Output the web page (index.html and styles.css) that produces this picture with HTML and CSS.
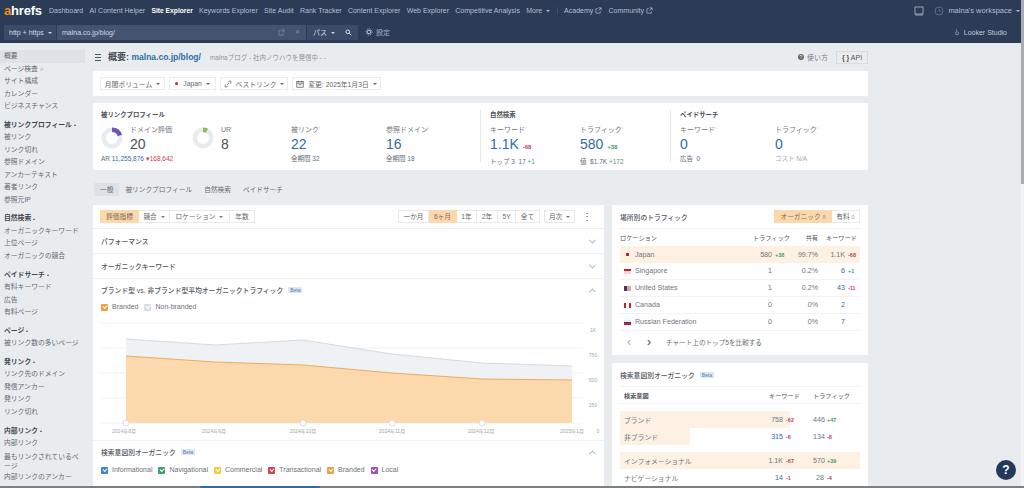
FILE: index.html
```html
<!DOCTYPE html>
<html>
    <head>
        <title>Site Explorer - malna.co.jp/blog/</title>
        <link rel="stylesheet" href="styles.css">
    </head>
    <body>
        <header class="topbar">
            <nav class="navRow">
                <span class="logo"><b>a</b>hrefs</span>
                <a>Dashboard</a>
                <a>AI Content Helper</a>
                <a class="active">Site Explorer</a>
                <a>Keywords Explorer</a>
                <a>Site Audit</a>
                <a>Rank Tracker</a>
                <a>Content Explorer</a>
                <a>Web Explorer</a>
                <a>Competitive Analysis</a>
                <a class="more">More <i class="caret"></i></a>
                <a class="ext">Academy <svg class="extIcon" viewBox="0 0 8 8"><path d="M6 5v2H1V2h2M4 1h3v3M7 1 4 4"/></svg></a>
                <a class="ext">Community <svg class="extIcon" viewBox="0 0 8 8"><path d="M6 5v2H1V2h2M4 1h3v3M7 1 4 4"/></svg></a>
                <span class="navRight">
                    <svg class="navIcon" viewBox="0 0 10 10"><rect x="1" y="1" width="8" height="7"/><path d="M1 9h8"/></svg>
                    <svg class="navIcon dim" viewBox="0 0 10 10"><circle cx="5" cy="5" r="4"/><path d="M5 3v2l2 0"/></svg>
                    <a>malna's workspace <i class="caret"></i></a>
                </span>
            </nav>
            <div class="searchRow">
                <div class="searchBox">
                    <span class="protocol">http + https <i class="caret"></i></span>
                    <span class="urlField">
                        <span>malna.co.jp/blog/</span>
                        <span class="urlIcons">
                            <svg class="extIcon dim" viewBox="0 0 8 8"><path d="M6 5v2H1V2h2M4 1h3v3M7 1 4 4"/></svg>
                            <span class="dim">✕</span>
                        </span>
                    </span>
                    <span class="pathMode">パス <i class="caret"></i></span>
                    <span class="searchBtn">
                        <svg viewBox="0 0 10 10"><circle cx="4" cy="4" r="2.6"/><path d="M6 6l3 3"/></svg>
                    </span>
                </div>
                <span class="settings">
                    <svg viewBox="0 0 10 10"><circle cx="5" cy="5" r="2.2"/><circle cx="5" cy="5" r="3.8" stroke-dasharray="1.5 1.5"/></svg>
                    設定
                </span>
                <span class="looker">
                    <svg viewBox="0 0 10 12"><circle cx="5" cy="8" r="2.6"/><path d="M4 1v3"/></svg>
                    Looker Studio
                </span>
            </div>
        </header>

        <div class="page">
            <aside class="sidebar">
                <ul class="sideList">
                    <li class="current">概要</li>
                    <li>ページ検査 <span class="tinyGlass">⌕</span></li>
                    <li>サイト構成</li>
                    <li>カレンダー</li>
                    <li>ビジネスチャンス</li>
                </ul>
                <ul class="sideList">
                    <li class="sideHead">被リンクプロフィール <i class="up"></i></li>
                    <li>被リンク</li>
                    <li>リンク切れ</li>
                    <li>参照ドメイン</li>
                    <li>アンカーテキスト</li>
                    <li>著者リンク</li>
                    <li>参照元IP</li>
                </ul>
                <ul class="sideList">
                    <li class="sideHead">自然検索 <i class="up"></i></li>
                    <li>オーガニックキーワード</li>
                    <li>上位ページ</li>
                    <li>オーガニックの競合</li>
                </ul>
                <ul class="sideList">
                    <li class="sideHead">ペイドサーチ <i class="up"></i></li>
                    <li>有料キーワード</li>
                    <li>広告</li>
                    <li>有料ページ</li>
                </ul>
                <ul class="sideList">
                    <li class="sideHead">ページ <i class="up"></i></li>
                    <li>被リンク数の多いページ</li>
                </ul>
                <ul class="sideList">
                    <li class="sideHead">発リンク <i class="up"></i></li>
                    <li>リンク先のドメイン</li>
                    <li>発信アンカー</li>
                    <li>発リンク</li>
                    <li>リンク切れ</li>
                </ul>
                <ul class="sideList">
                    <li class="sideHead">内部リンク <i class="up"></i></li>
                    <li>内部リンク</li>
                    <li class="wrap">最もリンクされているページ</li>
                    <li>内部リンクのアンカー</li>
                </ul>
            </aside>

            <main class="content">
                <div class="titleRow">
                    <span class="burger"></span>
                    <h1>概要: <span class="blue titleUrl">malna.co.jp/blog/</span></h1>
                    <span class="subtitle">malnaブログ - 社内ノウハウを発信中 - -</span>
                    <span class="help"><i class="helpDot">?</i> 使い方</span>
                    <span class="apiBtn"><b>{ }</b> API</span>
                </div>

                <div class="filters">
                    <span class="chip w65">月間ボリューム <i class="caret"></i></span>
                    <span class="chip w47"><i class="jpDot"></i> Japan <i class="caret"></i></span>
                    <span class="chip w68">
                        <svg class="chipIcon" viewBox="0 0 10 10"><path d="M4 6l2-2M3 5 1.5 6.5a1.4 1.4 0 0 0 2 2L5 7M5 3l1.5-1.5a1.4 1.4 0 0 1 2 2L7 5"/></svg>
                        ベストリンク <i class="caret"></i>
                    </span>
                    <span class="chip w89">
                        <svg class="chipIcon" viewBox="0 0 10 10"><rect x="1" y="2" width="8" height="7"/><path d="M1 4h8M3 1v2M7 1v2M3 6h4"/></svg>
                        変更: 2025年1月3日 <i class="caret"></i>
                    </span>
                </div>

                <section class="metrics">
                    <div class="metricGroup backlinks">
                        <h3>被リンクプロフィール</h3>
                        <div class="metricRow">
                            <div class="metric mDr">
                                <div class="ratingTop">
                                    <svg class="donut" viewBox="0 0 24 24">
                                        <circle class="donutBg" cx="12" cy="12" r="9"/>
                                        <circle class="donutDr" cx="12" cy="12" r="9" pathLength="100" stroke-dasharray="20 80" transform="rotate(-90 12 12)"/>
                                    </svg>
                                    <div>
                                        <div class="metricLabel">ドメイン評価<sup>i</sup></div>
                                        <div class="metricValue dark">20</div>
                                    </div>
                                </div>
                                <div class="metricSub arLine">AR <span class="blue">11,255,876</span> <span class="red">▾168,642</span></div>
                            </div>
                            <div class="metric mUr">
                                <div class="ratingTop">
                                    <svg class="donut" viewBox="0 0 24 24">
                                        <circle class="donutBg" cx="12" cy="12" r="9"/>
                                        <circle class="donutUr" cx="12" cy="12" r="9" pathLength="100" stroke-dasharray="8 92" transform="rotate(-90 12 12)"/>
                                    </svg>
                                    <div>
                                        <div class="metricLabel">UR<sup>i</sup></div>
                                        <div class="metricValue dark">8</div>
                                    </div>
                                </div>
                            </div>
                            <div class="metric mLinks">
                                <div class="metricLabel">被リンク<sup>i</sup></div>
                                <div class="metricValue blue">22</div>
                                <div class="metricSub">全期間 32</div>
                            </div>
                            <div class="metric mRefs">
                                <div class="metricLabel">参照ドメイン<sup>i</sup></div>
                                <div class="metricValue blue">16</div>
                                <div class="metricSub">全期間 18</div>
                            </div>
                        </div>
                    </div>
                    <div class="metricGroup organic">
                        <h3>自然検索</h3>
                        <div class="metricRow">
                            <div class="metric m90">
                                <div class="metricLabel">キーワード<sup>i</sup></div>
                                <div class="metricValue blue">1.1K <small class="red">-68</small></div>
                                <div class="metricSub">トップ 3 &nbsp;17 <span class="green">+1</span></div>
                            </div>
                            <div class="metric m90">
                                <div class="metricLabel">トラフィック<sup>i</sup></div>
                                <div class="metricValue blue">580 <small class="green">+38</small></div>
                                <div class="metricSub">値 &nbsp;$1.7K <span class="green">+172</span></div>
                            </div>
                        </div>
                    </div>
                    <div class="metricGroup paid">
                        <h3>ペイドサーチ</h3>
                        <div class="metricRow">
                            <div class="metric m95">
                                <div class="metricLabel">キーワード<sup>i</sup></div>
                                <div class="metricValue blue">0</div>
                                <div class="metricSub">広告 &nbsp;0</div>
                            </div>
                            <div class="metric m90">
                                <div class="metricLabel">トラフィック<sup>i</sup></div>
                                <div class="metricValue blue">0</div>
                                <div class="metricSub faint">コスト N/A</div>
                            </div>
                        </div>
                    </div>
                </section>

                <div class="tabs">
                    <span class="tab selected">一般</span>
                    <span class="tab">被リンクプロフィール</span>
                    <span class="tab">自然検索</span>
                    <span class="tab">ペイドサーチ</span>
                </div>

                <div class="columns">
                    <div class="mainCard">
                        <div class="toolbar">
                            <div class="segments">
                                <span class="seg on w39">評価指標</span>
                                <span class="seg w31">競合 <i class="caret grey"></i></span>
                                <span class="seg w60">ロケーション <i class="caret grey"></i></span>
                                <span class="seg w25">年数</span>
                            </div>
                            <div class="segments pushRight">
                                <span class="seg w31">一か月</span>
                                <span class="seg on w28">6ヶ月</span>
                                <span class="seg w20">1年</span>
                                <span class="seg w21">2年</span>
                                <span class="seg w18">5Y</span>
                                <span class="seg w24">全て</span>
                            </div>
                            <span class="seg single w31">月次 <i class="caret grey"></i></span>
                            <span class="kebab">⋮</span>
                        </div>

                        <div class="accRow">
                            <h4>パフォーマンス</h4>
                            <i class="chev"></i>
                        </div>
                        <div class="accRow">
                            <h4>オーガニックキーワード</h4>
                            <i class="chev"></i>
                        </div>

                        <div class="accOpen">
                            <div class="accHead">
                                <h4>ブランド型 vs. 非ブランド型平均オーガニックトラフィック <span class="beta">Beta</span></h4>
                                <i class="chev open"></i>
                            </div>
                            <div class="legend">
                                <span><i class="check orange"></i>Branded</span>
                                <span><i class="check pale"></i>Non-branded</span>
                            </div>
                            <svg class="chart" viewBox="0 0 511 122">
                                <g class="grid">
                                    <path d="M8 5H490M8 30H490M8 55H490M8 80H490M8 105H490"/>
                                </g>
                                <path class="areaGrey" d="M33 21 122 27 210 22 299 36 389 45 479 48V105H33Z"/>
                                <path class="lineGrey" d="M33 21 122 27 210 22 299 36 389 45 479 48"/>
                                <path class="areaOrange" d="M33 38 122 44 210 47 299 55 389 61 479 62V105H33Z"/>
                                <path class="lineOrange" d="M33 38 122 44 210 47 299 55 389 61 479 62"/>
                                <g class="marks">
                                    <circle cx="33" cy="105" r="3"/>
                                    <circle cx="210" cy="105" r="3"/>
                                    <circle cx="299" cy="105" r="3"/>
                                    <circle cx="389" cy="105" r="3"/>
                                </g>
                                <g class="axis">
                                    <text x="31" y="115" text-anchor="middle">2024年8月</text>
                                    <text x="121" y="115" text-anchor="middle">2024年9月</text>
                                    <text x="210" y="115" text-anchor="middle">2024年10月</text>
                                    <text x="299" y="115" text-anchor="middle">2024年11月</text>
                                    <text x="388" y="115" text-anchor="middle">2024年12月</text>
                                    <text x="479" y="115" text-anchor="middle">2025年1月</text>
                                    <text x="500" y="14" text-anchor="middle">1K</text>
                                    <text x="500" y="39" text-anchor="middle">750</text>
                                    <text x="500" y="64" text-anchor="middle">500</text>
                                    <text x="500" y="89" text-anchor="middle">250</text>
                                    <text x="505" y="115" text-anchor="middle">0</text>
                                </g>
                            </svg>
                        </div>

                        <div class="accOpen lastAcc">
                            <div class="accHead">
                                <h4>検索意図別オーガニック <span class="beta">Beta</span></h4>
                                <i class="chev open"></i>
                            </div>
                            <div class="legend">
                                <span><i class="check blueBox"></i>Informational</span>
                                <span><i class="check greenBox"></i>Navigational</span>
                                <span><i class="check yellowBox"></i>Commercial</span>
                                <span><i class="check redBox"></i>Transactional</span>
                                <span><i class="check orange"></i>Branded</span>
                                <span><i class="check purpleBox"></i>Local</span>
                            </div>
                        </div>
                    </div>

                    <div class="sideCards">
                        <section class="card locCard">
                            <div class="cardHead">
                                <h4>場所別のトラフィック</h4>
                                <div class="segments pushRight">
                                    <span class="seg on w58">オーガニック <small>8</small></span>
                                    <span class="seg w28">有料 <small>0</small></span>
                                </div>
                            </div>
                            <div class="tRow tHead">
                                <span class="cName">ロケーション</span>
                                <span class="cTraffic">トラフィック</span>
                                <span class="cShare">共有</span>
                                <span class="cKw">キーワード</span>
                            </div>
                            <div class="tRow hl">
                                <span class="cName"><i class="flag jp"></i>Japan</span>
                                <span class="cTraffic"><em>580</em><small class="green">+38</small></span>
                                <span class="cShare">99.7%</span>
                                <span class="cKw"><em>1.1K</em><small class="red">-68</small></span>
                            </div>
                            <div class="tRow">
                                <span class="cName"><i class="flag sg"></i>Singapore</span>
                                <span class="cTraffic"><em>1</em></span>
                                <span class="cShare">0.2%</span>
                                <span class="cKw"><em class="blue">6</em><small class="green">+1</small></span>
                            </div>
                            <div class="tRow">
                                <span class="cName"><i class="flag us"></i>United States</span>
                                <span class="cTraffic"><em>1</em></span>
                                <span class="cShare">0.2%</span>
                                <span class="cKw"><em class="blue">43</em><small class="red">-11</small></span>
                            </div>
                            <div class="tRow">
                                <span class="cName"><i class="flag ca"></i>Canada</span>
                                <span class="cTraffic"><em>0</em></span>
                                <span class="cShare">0%</span>
                                <span class="cKw"><em class="blue">2</em></span>
                            </div>
                            <div class="tRow">
                                <span class="cName"><i class="flag ru"></i>Russian Federation</span>
                                <span class="cTraffic"><em>0</em></span>
                                <span class="cShare">0%</span>
                                <span class="cKw"><em class="blue">7</em></span>
                            </div>
                            <div class="pager">
                                <span class="pageArrow dim">‹</span>
                                <span class="pageArrow">›</span>
                                <span class="pagerText">チャート上のトップ5を比較する</span>
                            </div>
                        </section>

                        <section class="card intentCard">
                            <div class="cardHead">
                                <h4>検索意図別オーガニック <span class="beta">Beta</span></h4>
                            </div>
                            <div class="iRow iHead">
                                <span class="iName"><b>検索意図</b></span>
                                <span class="iKw">キーワード</span>
                                <span class="iTr">トラフィック</span>
                            </div>
                            <div class="iGroup">
                                <div class="iRow">
                                    <i class="bar" style="width: 170px"></i>
                                    <span class="iName">ブランド</span>
                                    <span class="iKw"><em>758</em><small class="red">-62</small></span>
                                    <span class="iTr"><em>446</em><small class="green">+47</small></span>
                                </div>
                                <div class="iRow">
                                    <i class="bar" style="width: 70px"></i>
                                    <span class="iName">非ブランド</span>
                                    <span class="iKw"><em class="blue">315</em><small class="red">-6</small></span>
                                    <span class="iTr"><em>134</em><small class="red">-8</small></span>
                                </div>
                            </div>
                            <div class="iGroup">
                                <div class="iRow">
                                    <i class="bar" style="width: 240px"></i>
                                    <span class="iName">インフォメーショナル</span>
                                    <span class="iKw"><em>1.1K</em><small class="red">-67</small></span>
                                    <span class="iTr"><em>570</em><small class="green">+39</small></span>
                                </div>
                                <div class="iRow">
                                    <span class="iName">ナビゲーショナル</span>
                                    <span class="iKw"><em class="blue">14</em><small class="red">-1</small></span>
                                    <span class="iTr"><em>28</em><small class="red">-4</small></span>
                                </div>
                            </div>
                        </section>
                    </div>
                </div>
            </main>
        </div>

        <div class="scrollbar"></div>
        <div class="windowEdge"><span class="edgeBlob"></span></div>
        <span class="helpFab">?</span>
    </body>
</html>
```

FILE: styles.css
```css
* {
    box-sizing: border-box;
}

html, body {
    height: 488px;
    overflow: hidden;
}

body {
    margin: 0;
    background-color: #e9ecef;
    color: #555c66;
    font-family: "Liberation Sans", "Noto Sans CJK JP", sans-serif;
    font-size: 9px;
}

h1, h3, h4, ul {
    margin: 0;
    padding: 0;
}

i, em {
    font-style: normal;
}

.blue {
    color: #2f6ea5;
}

.red {
    color: #c8434f;
}

.green {
    color: #3f9e6c;
}

.dark {
    color: #4a4f57;
}

.dim {
    opacity: 0.45;
}

.caret {
    display: inline-block;
    width: 0;
    height: 0;
    margin-left: 2px;
    vertical-align: middle;
    border-left: 2px solid transparent;
    border-right: 2px solid transparent;
    border-top: 2.5px solid currentColor;
}

.caret.grey {
    color: #777;
}

/* top bars */
.topbar {
    height: 43px;
    background-color: #2c3b56;
    color: #b6bfcc;
}

.navRow {
    display: flex;
    align-items: center;
    height: 21px;
    padding-left: 4px;
    font-size: 7px;
    white-space: nowrap;
}

.navRow a {
    margin-right: 6.3px;
}

.navRow a.active {
    color: #fff;
    font-size: 6.7px;
    font-weight: bold;
}

.navRow a.more {
    padding-right: 7px;
    margin-right: 6px;
    border-right: 1px solid #3f4e69;
}

.logo {
    width: 45px;
    color: #fff;
    font-size: 13px;
    font-weight: bold;
    letter-spacing: -0.2px;
}

.logo b {
    color: #f28a1e;
}

.extIcon {
    width: 7px;
    height: 7px;
    fill: none;
    stroke: currentColor;
    stroke-width: 0.8;
    vertical-align: -1px;
}

.navRight {
    display: flex;
    align-items: center;
    gap: 10px;
    margin-left: auto;
    font-size: 7.5px;
}

.navRight a {
    margin-left: -6px;
    margin-right: 4px;
}

.navIcon {
    width: 10px;
    height: 10px;
    fill: none;
    stroke: currentColor;
    stroke-width: 0.8;
}

.searchRow {
    display: flex;
    align-items: center;
    height: 22px;
    padding-left: 4px;
    font-size: 7px;
}

.searchBox {
    display: flex;
    height: 15px;
    width: 354px;
    background-color: #3b4a66;
    line-height: 15px;
    color: #d3d8e0;
}

.protocol {
    width: 53px;
    padding-left: 5px;
    border-right: 1px solid #2c3b56;
}

.urlField {
    display: flex;
    justify-content: space-between;
    width: 250px;
    padding: 0 6px 0 5px;
    background-color: #44536e;
    border-right: 1px solid #2c3b56;
}

.urlIcons {
    display: flex;
    align-items: center;
    gap: 10px;
    font-size: 6px;
}

.pathMode {
    width: 32px;
    padding-left: 6px;
}

.searchBtn {
    display: flex;
    align-items: center;
    justify-content: center;
    width: 19px;
}

.searchBtn svg {
    width: 7px;
    height: 7px;
    fill: none;
    stroke: #e5e8ed;
    stroke-width: 1.3;
}

.settings {
    display: flex;
    align-items: center;
    gap: 3px;
    margin-left: 7px;
    color: #a6b0bf;
}

.settings svg {
    width: 8px;
    height: 8px;
    fill: none;
    stroke: #ccd2db;
    stroke-width: 1.1;
}

.looker {
    display: flex;
    align-items: center;
    gap: 4px;
    margin-left: auto;
    margin-right: 17px;
    color: #c3cad5;
}

.looker svg {
    width: 6px;
    height: 8px;
    fill: none;
    stroke: currentColor;
    stroke-width: 0.9;
}

/* page */
.page {
    display: flex;
    height: 445px;
    overflow: hidden;
}

.sidebar {
    flex: none;
    width: 93px;
    padding-top: 7px;
    color: #626a74;
    font-size: 6.8px;
}

.sideList {
    list-style: none;
    margin-bottom: 6.2px;
}

.sideList li {
    height: 12.5px;
    padding-left: 4px;
    line-height: 12.5px;
    white-space: nowrap;
}

.sideList li.wrap {
    height: 21px;
    line-height: 9px;
    padding-top: 2px;
    padding-right: 11px;
    white-space: normal;
}

.sideList li.current {
    width: 85px;
    background-color: #dfe2e6;
}

.sideList li.sideHead {
    color: #43484f;
    font-weight: bold;
}

.up {
    display: inline-block;
    vertical-align: middle;
    border-left: 1.5px solid transparent;
    border-right: 1.5px solid transparent;
    border-bottom: 2.5px solid #555;
}

.tinyGlass {
    color: #9aa0a8;
    font-size: 7px;
}

.content {
    width: 775px;
}

.titleRow {
    display: flex;
    align-items: center;
    height: 28px;
}

.burger {
    width: 6px;
    height: 7px;
    margin-left: 2px;
    border-top: 1px solid #555;
    border-bottom: 1px solid #555;
}

.burger::after {
    content: "";
    display: block;
    margin-top: 2px;
    border-top: 1px solid #555;
}

.titleRow h1 {
    margin-left: 7px;
    font-size: 9px;
    line-height: 12px;
    color: #4a4f57;
}

.titleUrl {
    font-size: 8.5px;
}

.subtitle {
    margin-left: 9px;
    color: #8d939b;
    font-size: 6.5px;
}

.help {
    display: flex;
    align-items: center;
    gap: 3px;
    margin-left: auto;
    color: #7a8088;
    font-size: 7px;
}

.helpDot {
    width: 6px;
    height: 6px;
    border-radius: 50%;
    background-color: #666;
    color: #e9ecef;
    font-size: 5px;
    line-height: 6px;
    text-align: center;
}

.apiBtn {
    width: 32px;
    height: 13px;
    margin-left: 8px;
    border: 1px solid #d9dcdf;
    color: #555;
    font-size: 7px;
    line-height: 11px;
    text-align: center;
}

.filters {
    display: flex;
    gap: 4px;
    align-items: center;
    height: 25px;
    padding-left: 7px;
    background-color: #fff;
}

.chip {
    display: flex;
    align-items: center;
    justify-content: center;
    gap: 2px;
    height: 13px;
    border: 1px solid #e9ebed;
    color: #666;
    font-size: 6.8px;
    white-space: nowrap;
}

.w18 { width: 18px; }
.w20 { width: 20px; }
.w21 { width: 21px; }
.w24 { width: 24px; }
.w25 { width: 25px; }
.w28 { width: 28px; }
.w31 { width: 31px; }
.w39 { width: 39px; }
.w47 { width: 47px; }
.w58 { width: 58px; }
.w60 { width: 60px; }
.w65 { width: 65px; }
.w68 { width: 68px; }
.w89 { width: 89px; }

.jpDot {
    width: 3px;
    height: 3px;
    margin-right: 3px;
    border-radius: 50%;
    background-color: #c4202f;
}

.chipIcon {
    width: 8px;
    height: 8px;
    margin-right: 2px;
    fill: none;
    stroke: #555;
    stroke-width: 0.9;
}

.metrics {
    display: flex;
    height: 67px;
    margin-top: 7px;
    padding-top: 7px;
    background-color: #fff;
}

.metricGroup h3 {
    height: 14px;
    color: #4a4f57;
    font-size: 6.4px;
    line-height: 10px;
}

.backlinks {
    width: 387px;
    padding-left: 8px;
}

.organic {
    width: 190px;
    height: 52px;
    padding-left: 9px;
    border-left: 1px solid #e6e8ea;
}

.paid {
    height: 52px;
    padding-left: 9px;
    border-left: 1px solid #e6e8ea;
}

.metricRow {
    display: flex;
}

.metric {
    flex: none;
}

.mDr { width: 91px; }
.mUr { width: 99px; }
.mLinks { width: 95px; }
.mRefs { width: 90px; }
.m90 { width: 90px; }
.m95 { width: 95px; }

.ratingTop {
    display: flex;
    gap: 7px;
    height: 28.5px;
}

.donut {
    width: 22px;
    height: 22px;
    margin-top: 3px;
    flex: none;
    fill: none;
    stroke-width: 5;
}

.donutBg {
    stroke: #e9ecef;
}

.donutDr {
    stroke: #6f55b5;
}

.donutUr {
    stroke: #8fbf4a;
}

.metricLabel {
    height: 11px;
    color: #70767e;
    font-size: 7px;
    line-height: 11px;
    white-space: nowrap;
}

.metricLabel sup {
    color: #aaa;
    font-size: 4px;
    line-height: 0;
    vertical-align: 3px;
}

.metricValue {
    font-size: 14px;
    line-height: 19px;
    white-space: nowrap;
}

.metricValue small {
    font-size: 6px;
    font-weight: bold;
}

.metricSub {
    margin-top: -1.5px;
    color: #666c74;
    font-size: 6.5px;
    line-height: 11px;
    white-space: nowrap;
}

.metricSub.arLine {
    margin-top: 0;
}

.faint {
    color: #a6abb1;
}

.tabs {
    display: flex;
    align-items: center;
    height: 35px;
    padding: 4px 0 0 1px;
}

.tab {
    height: 13px;
    padding: 0 6px;
    color: #666c74;
    font-size: 6.7px;
    line-height: 13px;
}

.tab.selected {
    background-color: #dde0e4;
}

.columns {
    display: flex;
    gap: 8px;
}

.mainCard {
    flex: none;
    width: 511px;
    height: 290px;
    background-color: #fff;
}

.toolbar {
    display: flex;
    align-items: center;
    height: 24px;
    padding-left: 7px;
    border-bottom: 1px solid #eef0f2;
}

.segments {
    display: flex;
}

.pushRight {
    margin-left: auto;
}

.seg {
    flex: none;
    display: block;
    height: 13px;
    border: 1px solid #e7e9eb;
    border-left-width: 0;
    color: #666;
    font-size: 6.7px;
    line-height: 11px;
    text-align: center;
    white-space: nowrap;
}

.seg:first-child {
    border-left-width: 1px;
}

.seg small {
    font-size: 5.5px;
    color: #999;
}

.seg.on {
    border-color: #fcd9ad;
    background-color: #fcd9ad;
    color: #7c6a52;
}

.seg.single {
    margin-left: 4px;
    border-left-width: 1px;
}

.kebab {
    width: 29px;
    padding-right: 6px;
    color: #555;
    font-size: 10px;
    text-align: center;
}

.accRow {
    display: flex;
    align-items: center;
    justify-content: space-between;
    height: 25px;
    padding: 0 8px;
    border-bottom: 1px solid #eef0f2;
}

h4 {
    color: #4f545b;
    font-size: 6.8px;
    font-weight: 500;
    white-space: nowrap;
}

.chev {
    width: 5px;
    height: 5px;
    margin-right: 1px;
    border-right: 1px solid #aeb3b9;
    border-bottom: 1px solid #aeb3b9;
    transform: rotate(45deg) translate(-1px, -1px);
}

.chev.open {
    transform: rotate(225deg) translate(-1px, -1px);
}

.accHead {
    display: flex;
    align-items: center;
    justify-content: space-between;
    height: 22px;
    padding: 0 8px;
}

.beta {
    margin-left: 3px;
    padding: 0 2px;
    background-color: #dbe8f6;
    color: #5a7fa8;
    font-size: 5px;
    vertical-align: 1px;
}

.legend {
    display: flex;
    gap: 6px;
    height: 12px;
    padding-left: 8px;
    color: #6b7178;
    font-size: 7px;
    line-height: 12px;
}

.legend span {
    display: flex;
    align-items: center;
}

.check {
    display: flex;
    align-items: center;
    justify-content: center;
    width: 7px;
    height: 7px;
    margin-right: 4px;
    border-radius: 1px;
}

.check::after {
    content: "";
    width: 3px;
    height: 1.8px;
    margin-top: -1px;
    border-left: 1px solid #fff;
    border-bottom: 1px solid #fff;
    transform: rotate(-45deg);
}

.orange { background-color: #f0a040; }
.pale { background-color: #d8e0e6; }
.blueBox { background-color: #3b86c8; }
.greenBox { background-color: #3f9e6c; }
.yellowBox { background-color: #ecd23c; }
.redBox { background-color: #d9434e; }
.purpleBox { background-color: #9a52b8; }

.chart {
    display: block;
    width: 511px;
    height: 123px;
    margin-top: 5px;
    border-bottom: 1px solid #eef0f2;
}

.grid path {
    stroke: #f0f2f4;
    stroke-width: 1;
    fill: none;
}

.areaGrey {
    fill: #eff2f4;
}

.lineGrey {
    fill: none;
    stroke: #d5dbe0;
}

.areaOrange {
    fill: #fcd9ad;
}

.lineOrange {
    fill: none;
    stroke: #eeaa60;
}

.marks circle {
    fill: #fff;
    stroke: #cfd3d7;
    stroke-width: 0.7;
}

.axis text {
    fill: #a2a7ad;
    font-size: 5px;
}

.lastAcc .legend {
    margin-top: 1px;
}

/* right side cards */
.sideCards {
    display: flex;
    flex-direction: column;
    gap: 8px;
    width: 256px;
}

.card {
    padding: 0 8px;
    background-color: #fff;
}

.locCard {
    height: 150px;
}

.intentCard {
    height: 140px;
}

.cardHead {
    display: flex;
    align-items: center;
    height: 24px;
    border-bottom: 1px solid #f2f3f5;
}

.tRow {
    display: flex;
    align-items: center;
    height: 17px;
    border-bottom: 1px solid #f2f3f5;
    color: #70767e;
    font-size: 7.1px;
}

.tRow.tHead {
    color: #4f545b;
    font-size: 6.2px;
    border-bottom: none;
    white-space: nowrap;
}

.hl {
    background-color: #fdf1e3;
    border-bottom: none;
}

.tRow small, .iRow small {
    display: inline-block;
    margin-left: 3px;
    font-size: 5.5px;
    font-weight: bold;
    text-align: left;
}

.cName {
    display: flex;
    align-items: center;
    width: 133px;
}

.flag {
    width: 7px;
    height: 5px;
    margin: 0 4px;
}

.flag.jp {
    background: radial-gradient(circle, #c4202f 1.4px, transparent 1.6px);
}

.flag.sg {
    background: linear-gradient(#c4202f 50%, #f3d8da 50%);
}

.flag.us {
    background: linear-gradient(90deg, #3c3b6e 40%, #d9a6ac 40%);
}

.flag.ca {
    background: linear-gradient(90deg, #c4202f 25%, #fff 25%, #fff 75%, #c4202f 75%);
}

.flag.ru {
    background: linear-gradient(#eee 33%, #39397a 33%, #39397a 66%, #c4202f 66%);
}

.cTraffic {
    width: 43px;
    white-space: nowrap;
}

.cTraffic em, .cKw em {
    display: inline-block;
    width: 19px;
    text-align: right;
}

.cShare {
    width: 22px;
    text-align: right;
    white-space: nowrap;
}

.cKw {
    margin-left: 8px;
    white-space: nowrap;
}

.pager {
    display: flex;
    align-items: center;
    height: 22px;
    padding-left: 7px;
    color: #666c74;
    font-size: 6.6px;
}

.pageArrow {
    width: 20px;
    color: #444;
    font-size: 12px;
    line-height: 12px;
}

.pagerText {
    margin-left: -1px;
}

.iRow {
    display: flex;
    position: relative;
    align-items: center;
    height: 17px;
    color: #70767e;
    font-size: 7.1px;
}

.iRow .bar {
    position: absolute;
    top: 0;
    bottom: 0;
    left: 0;
    background-color: #fdf1e3;
}

.iRow span {
    position: relative;
}

.iName {
    width: 145px;
    padding-left: 4px;
    font-size: 6.8px;
}

.iKw {
    width: 48px;
    white-space: nowrap;
}

.iTr {
    white-space: nowrap;
}

.iKw em {
    display: inline-block;
    width: 18px;
    text-align: right;
}

.iTr em {
    display: inline-block;
    width: 11px;
    text-align: right;
}

.iRow.iHead {
    color: #4f545b;
    font-size: 6.2px;
    border-bottom: 1px solid #f2f3f5;
}

.iHead .iName {
    width: 149px;
    font-size: 6.2px;
}

.iHead .iKw {
    width: 44px;
}

.iGroup {
    margin-top: 7px;
}

/* things over the page */
.scrollbar {
    position: absolute;
    top: 0;
    right: 0;
    width: 3px;
    height: 488px;
    background: linear-gradient(#a9acb0 184px, #f3f4f6 184px);
}

.windowEdge {
    position: absolute;
    left: 0;
    right: 0;
    bottom: 0;
    height: 2px;
    background-color: #7c8084;
}

.edgeBlob {
    position: absolute;
    left: 200px;
    bottom: 0;
    width: 120px;
    height: 2px;
    border-radius: 3px 3px 0 0;
    background-color: #2f6ea5;
}

.helpFab {
    position: absolute;
    right: 8px;
    bottom: 8px;
    width: 20px;
    height: 20px;
    border-radius: 50%;
    background-color: #24385c;
    color: #fff;
    font-size: 12px;
    font-weight: bold;
    line-height: 20px;
    text-align: center;
}
```
